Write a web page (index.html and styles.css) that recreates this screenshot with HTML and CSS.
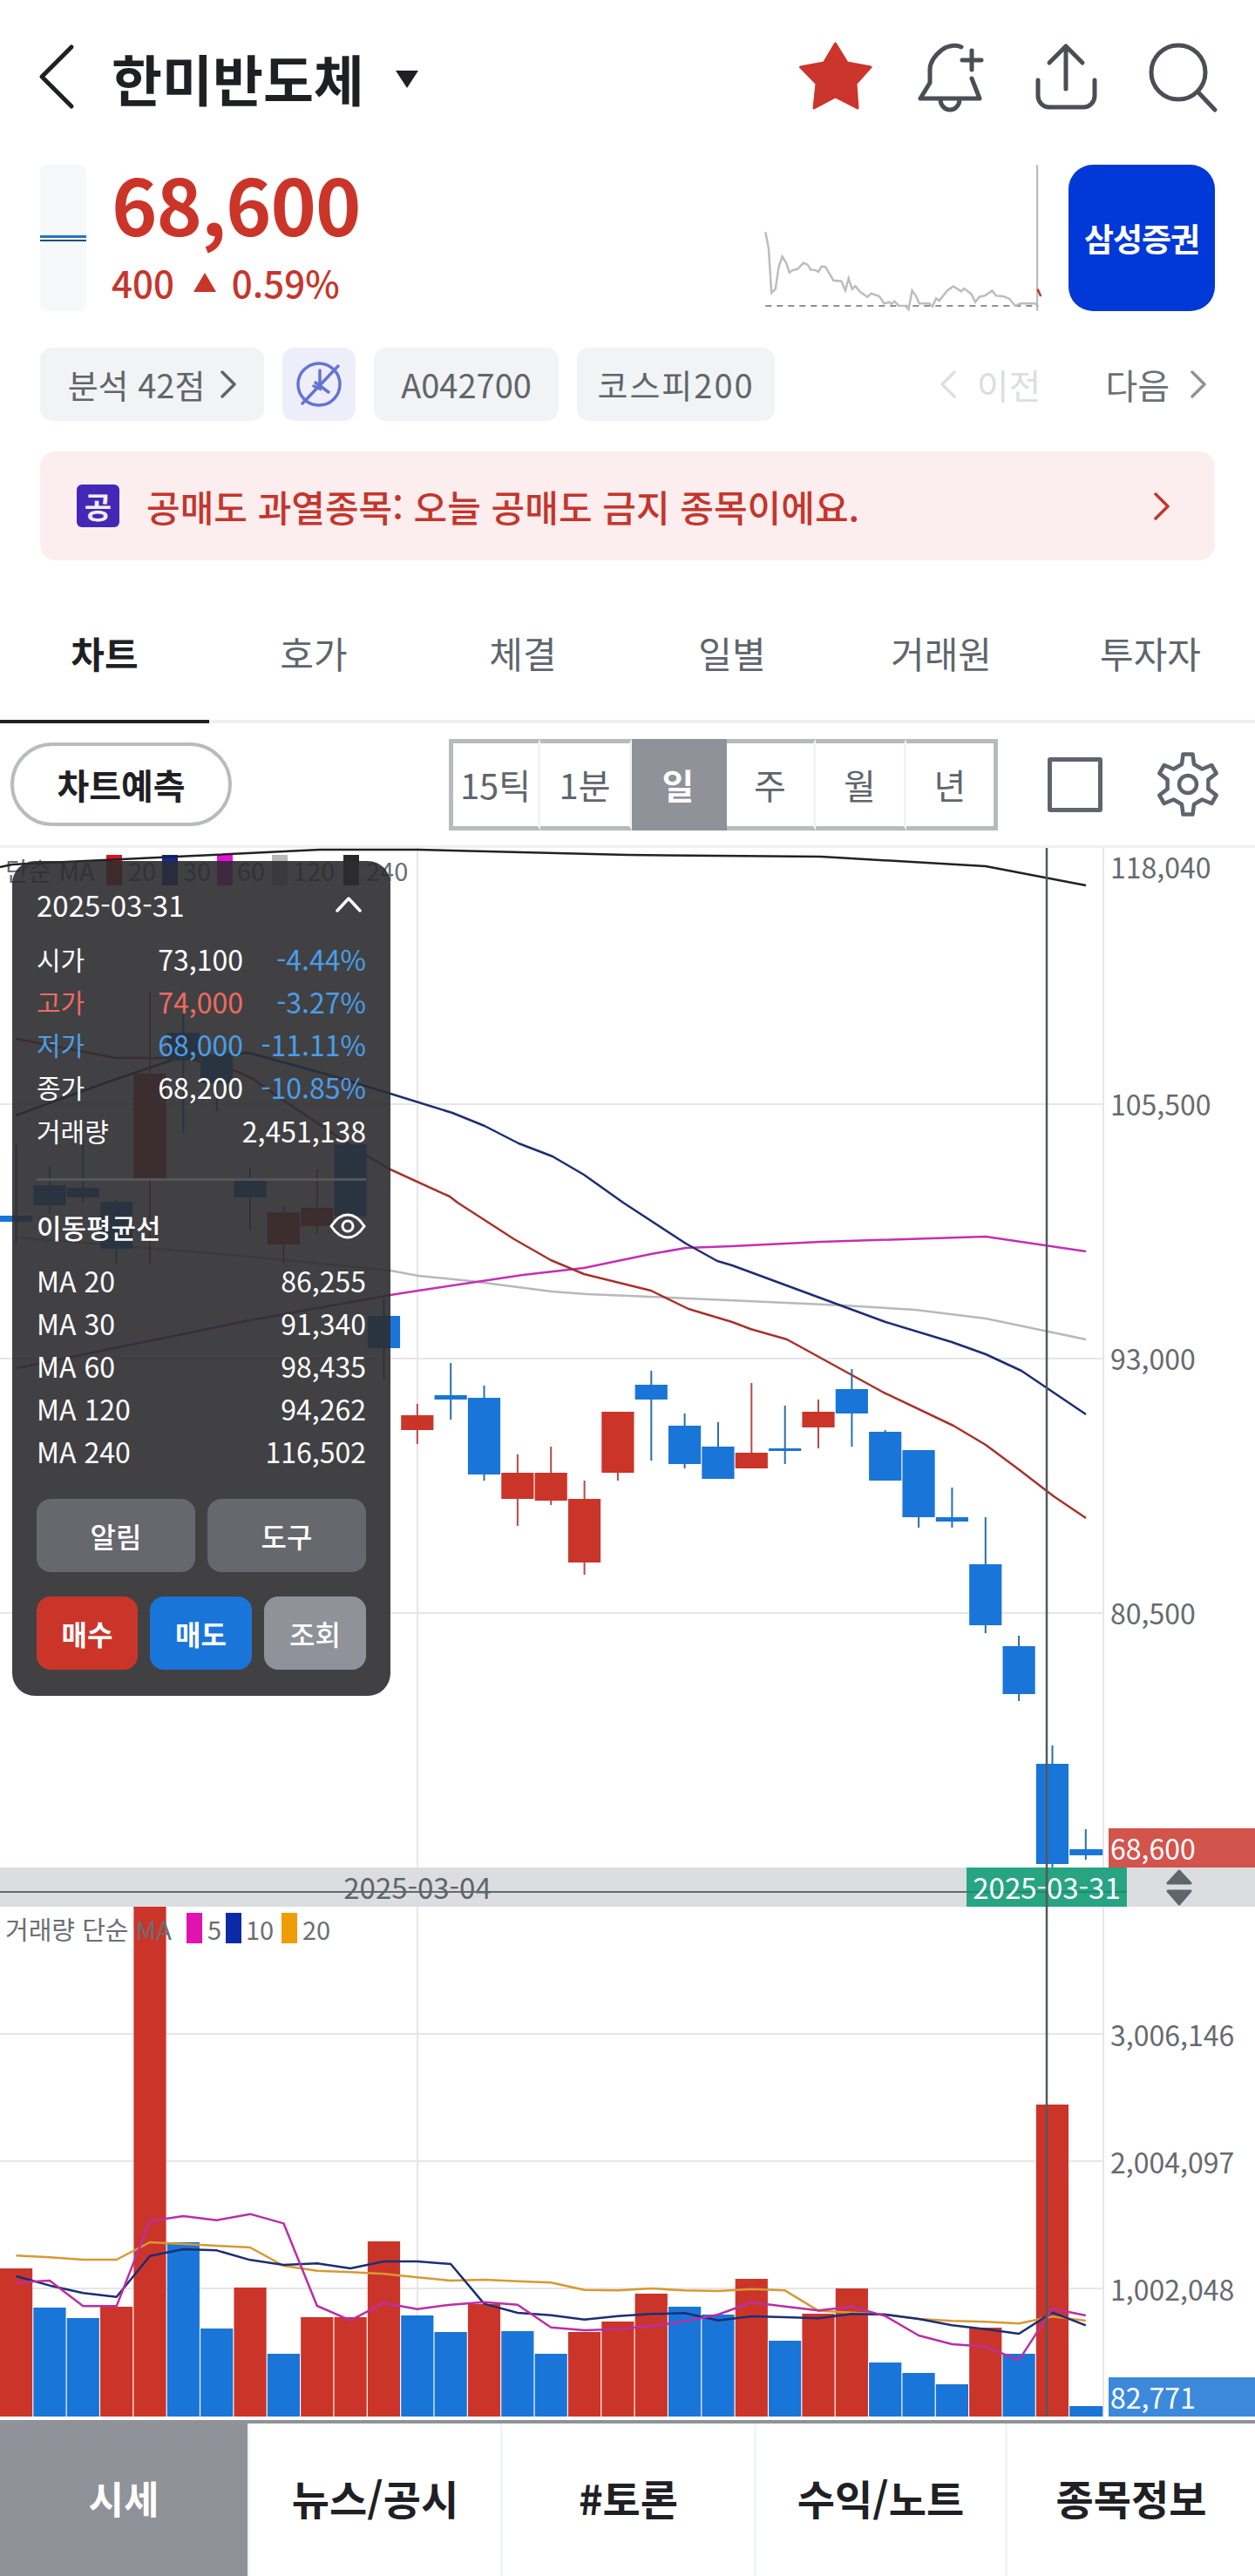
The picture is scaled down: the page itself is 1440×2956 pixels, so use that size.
FILE: index.html
```html
<!DOCTYPE html>
<html lang="ko">
<head>
<meta charset="utf-8">
<title>한미반도체</title>
<link rel="stylesheet" href="styles.css">
</head>
<body>
<div class="page">
  <header class="topbar">
    <svg class="back" width="44" height="76" viewBox="0 0 44 76"><path d="M38 4 4 38l34 34"/></svg>
    <h1 class="title">한미반도체</h1>
    <svg class="caret" width="26" height="20" viewBox="0 0 26 20"><path d="M0 0h26L13 20z"/></svg>
    <div class="top-actions">
      <svg class="star" width="90" height="88" viewBox="0 0 90 88"><path d="M44.500 6 58 28l27 5-17 19 2 28-25.500-13L20 80l3-28L4.500 33l27-5z"/></svg>
      <svg class="ic bell" width="80" height="88" viewBox="0 0 80 88"><path d="M53 10C47 7 38 8 31 13 22 20 17 28 17 36v15L6 69h68l-9-23M65 14v22M54 25h22M29 70a11 12 0 0 0 22 0"/></svg>
      <svg class="ic share" width="80" height="84" viewBox="0 0 80 84"><path d="M39 56V7M20 26 39 7l19 19M7 46v18a13 13 0 0 0 13 13h39a13 13 0 0 0 13-13V46"/></svg>
      <svg class="ic search" width="84" height="86" viewBox="0 0 84 86"><circle cx="38" cy="38" r="31"/><path d="m60 60 20 21"/></svg>
    </div>
  </header>

  <section class="quote">
    <div class="mini"><span class="mini-line"></span></div>
    <div class="price-box">
      <div class="price">68,600</div>
      <div class="change"><span>400</span><svg width="26" height="22" viewBox="0 0 26 22"><path d="M13 0l13 22H0z"/></svg><span>0.59%</span></div>
    </div>
    <svg class="spark" width="321" height="173" viewBox="340 560 700 520" preserveAspectRatio="none">
      <path class="spark-base" d="M345 1053H1025"/>
      <polyline class="spark-line" points="345,798 353,855 360,1008 370,995 378,920 387,883 397,905 405,938 413,930 425,926 440,905 450,910 458,928 470,930 478,935 485,917 495,918 515,965 535,968 545,1000 553,958 562,995 570,985 582,1005 600,1022 610,1010 630,1020 642,1045 655,1040 660,1047 668,1037 678,1052 695,1053 703,1065 712,1000 722,1020 730,1045 755,1045 763,1055 772,1027 780,1035 800,1000 815,985 835,1003 842,993 860,1012 870,1040 880,1022 895,1017 912,1000 922,1018 940,1020 955,1028 970,1053 985,1044 1020,1045 1028,1055"/>
      <path class="spark-now" d="M1025 567V1070"/>
      <path class="spark-tick" d="M1026 995 1034 1020"/>
    </svg>
    <div class="broker">삼성증권</div>
  </section>

  <nav class="chips">
    <span class="chip chip-score">분석 42점<svg class="chev" width="18" height="32" viewBox="0 0 18 32"><path d="m2 2 14 14L2 30"/></svg></span>
    <span class="chip chip-k">
      <svg width="56" height="56" viewBox="0 0 56 56"><circle cx="28" cy="28" r="24"/><path d="M50 7 9 50M29 12v21l-7-3M24 26l15 11"/></svg>
    </span>
    <span class="chip chip-code">A042700</span>
    <span class="chip chip-index">코스피200</span>
    <div class="pager">
      <span class="pager-off"><svg class="chev" width="18" height="32" viewBox="0 0 18 32"><path d="M16 2 2 16l14 14"/></svg>이전</span>
      <span class="pager-on">다음<svg class="chev" width="18" height="32" viewBox="0 0 18 32"><path d="m2 2 14 14L2 30"/></svg></span>
    </div>
  </nav>

  <aside class="notice">
    <span class="badge">공</span>
    <span class="notice-text">공매도 과열종목: 오늘 공매도 금지 종목이에요.</span>
    <svg class="chev notice-chev" width="18" height="32" viewBox="0 0 18 32"><path d="m2 2 14 14L2 30"/></svg>
  </aside>

  <nav class="tabs">
    <a class="tab tab-on">차트</a>
    <a class="tab">호가</a>
    <a class="tab">체결</a>
    <a class="tab">일별</a>
    <a class="tab">거래원</a>
    <a class="tab">투자자</a>
  </nav>

  <div class="toolbar">
    <button class="pill">차트예측</button>
    <div class="seg">
      <span class="seg-item w105">15틱</span>
      <span class="seg-item w105">1분</span>
      <span class="seg-item seg-on">일</span>
      <span class="seg-item w102">주</span>
      <span class="seg-item w104">월</span>
      <span class="seg-item w105">년</span>
    </div>
    <span class="square"></span>
    <svg class="gear" width="80" height="80" viewBox="0 0 80 80"><path d="M33 17 34.500 5.400h11L47 17l9.400 5.500L67.200 18l5.500 9.500-9.300 7.100v10.800l9.300 7.100-5.500 9.500-10.800-4.500L47 63l-1.500 11.600h-11L33 63l-9.400-5.500L12.800 62l-5.500-9.500 9.300-7.100V34.600l-9.300-7.100 5.500-9.500 10.800 4.500z"/><circle cx="40" cy="40" r="10"/></svg>
  </div>

  <main class="chart">
    <svg class="plot" width="1440" height="1807" viewBox="0 970 1440 1807">
      <rect class="rule-top" x="0" y="970" width="1440" height="3"/>
      <g class="grid">
        <path d="M0 1267H1266M0 1559H1266M0 1851H1266M0 2334H1266M0 2480H1266M0 2626H1266"/>
        <path d="M479 973V2773M1266 973V2773"/>
      </g>

      <g class="legend">
        <text x="6" y="998">단순 MA</text>
        <rect class="c-red" x="122" y="981" width="18" height="35"/><text x="147" y="998">20</text>
        <rect class="c-navy" x="186" y="981" width="18" height="35"/><text x="210" y="998">30</text>
        <rect class="c-mag" x="249" y="981" width="18" height="35"/><text x="272" y="998">60</text>
        <rect class="c-gray" x="312" y="981" width="18" height="35"/><text x="336" y="998">120</text>
        <rect class="c-black" x="394" y="981" width="18" height="35"/><text x="420" y="998">240</text>
      </g>

      <g class="ma">
        <polyline class="l-black" points="0,995 14,992 202,983 367,975 480,975 720,981 942,983 1131,994 1246,1016"/>
        <polyline class="l-gray" points="18,1420 266,1440 448,1458 480,1464 540,1470 633,1482 673,1485 767,1489 858,1493 968,1498 1050,1503 1131,1513 1246,1537"/>
        <polyline class="l-mag" points="19,1570 287,1515 448,1486 480,1481 540,1472 600,1463 670,1455 747,1439 787,1432 840,1430 942,1425 1131,1419 1246,1436"/>
        <polyline class="l-navy" points="18,1280 128,1240 202,1215 285,1208 376,1233 448,1255 519,1277 556,1292 595,1312 634,1327 670,1348 715,1380 787,1427 823,1447 840,1452 1016,1517 1092,1540 1131,1554 1172,1573 1246,1623"/>
        <polyline class="l-red" points="18,1192 133,1214 211,1214 266,1227 289,1237 321,1260 422,1327 448,1342 516,1373 525,1380 590,1422 632,1446 670,1462 747,1481 790,1502 840,1517 861,1525 903,1537 1014,1598 1094,1636 1131,1658 1170,1687 1209,1717 1246,1742"/>
      </g>

      <path class="wick-up" d="M172 1138V1450M325.400 1384V1450M363.800 1342V1416M478.800 1611V1657M593.900 1669V1751M632.200 1660V1727M670.600 1699V1807M708.900 1620V1699M862.300 1587V1685M939 1606V1662"/>
      <path class="wick-down" d="M18.600 1313V1427M57 1338V1393M95.300 1308V1380M133.700 1377V1450M210.400 1163V1300M248.700 1210V1275M287 1340V1412M440.500 1490V1584M517.200 1564V1629M555.500 1590V1699M747.300 1573V1676M785.600 1622V1685M824 1632V1697M900.700 1613V1680M977.400 1571V1660M1015.700 1641V1699M1054.100 1664V1753M1092.400 1707V1753M1130.800 1741V1874M1169.100 1877V1952M1207.500 2003V2143M1245.800 2099V2134"/>

      <g class="down">
        <rect x="0" y="1395" width="37.200" height="7"/>
        <rect x="38.350" y="1360" width="37.200" height="23"/>
        <rect x="76.700" y="1363" width="37.200" height="11"/>
        <rect x="115.050" y="1379" width="37.200" height="54"/>
        <rect x="191.750" y="1185" width="37.200" height="32"/>
        <rect x="230.100" y="1210" width="37.200" height="33"/>
        <rect x="268.450" y="1353" width="37.200" height="21"/>
        <rect x="383.500" y="1313" width="37.200" height="83"/>
        <rect x="421.850" y="1510" width="37.200" height="37"/>
        <rect x="498.550" y="1601" width="37.200" height="5"/>
        <rect x="536.900" y="1604" width="37.200" height="88"/>
        <rect x="728.650" y="1589" width="37.200" height="17"/>
        <rect x="767" y="1636" width="37.200" height="44"/>
        <rect x="805.350" y="1660" width="37.200" height="37"/>
        <rect x="882.050" y="1662" width="37.200" height="3"/>
        <rect x="958.750" y="1594" width="37.200" height="28"/>
        <rect x="997.100" y="1643" width="37.200" height="56"/>
        <rect x="1035.450" y="1664" width="37.200" height="77"/>
        <rect x="1073.800" y="1741" width="37.200" height="5"/>
        <rect x="1112.150" y="1795" width="37.200" height="70"/>
        <rect x="1150.500" y="1889" width="37.200" height="55"/>
        <rect x="1188.850" y="2024" width="37.200" height="115"/>
        <rect x="1227.200" y="2122" width="38" height="7"/>
      </g>
      <g class="up">
        <rect x="153.400" y="1232" width="37.200" height="121"/>
        <rect x="306.800" y="1391" width="37.200" height="37"/>
        <rect x="345.150" y="1386" width="37.200" height="21"/>
        <rect x="460.200" y="1624" width="37.200" height="17"/>
        <rect x="575.250" y="1690" width="37.200" height="30"/>
        <rect x="613.600" y="1690" width="37.200" height="32"/>
        <rect x="651.950" y="1720" width="37.200" height="73"/>
        <rect x="690.300" y="1620" width="37.200" height="70"/>
        <rect x="843.700" y="1667" width="37.200" height="18"/>
        <rect x="920.400" y="1620" width="37.200" height="18"/>
      </g>

      <g class="axis">
        <text x="1274" y="994">118,040</text>
        <text x="1274" y="1266">105,500</text>
        <text x="1274" y="1558">93,000</text>
        <text x="1274" y="1850">80,500</text>
        <text x="1274" y="2334">3,006,146</text>
        <text x="1274" y="2480">2,004,097</text>
        <text x="1274" y="2626">1,002,048</text>
      </g>

      <rect class="c-price" x="1272" y="2098" width="168" height="45"/>
      <text class="axis-on" x="1274" y="2120">68,600</text>

      <rect class="c-time" x="0" y="2143" width="1440" height="45"/>
      <rect class="c-hair" x="0" y="2170" width="1109" height="2"/>
      <text class="axis-date" x="479" y="2165">2025-03-04</text>

      <g class="down">
        <rect x="38.350" y="2648" width="37.200" height="125"/>
        <rect x="76.700" y="2660" width="37.200" height="113"/>
        <rect x="191.750" y="2573" width="37.200" height="200"/>
        <rect x="230.100" y="2672" width="37.200" height="101"/>
        <rect x="306.800" y="2701" width="37.200" height="72"/>
        <rect x="460.200" y="2657" width="37.200" height="116"/>
        <rect x="498.550" y="2676" width="37.200" height="97"/>
        <rect x="575.250" y="2675" width="37.200" height="98"/>
        <rect x="613.600" y="2701" width="37.200" height="72"/>
        <rect x="767" y="2647" width="37.200" height="126"/>
        <rect x="805.350" y="2656" width="37.200" height="117"/>
        <rect x="882.050" y="2686" width="37.200" height="87"/>
        <rect x="997.100" y="2711" width="37.200" height="62"/>
        <rect x="1035.450" y="2723" width="37.200" height="50"/>
        <rect x="1073.800" y="2736" width="37.200" height="37"/>
        <rect x="1150.500" y="2701" width="37.200" height="72"/>
        <rect x="1227.200" y="2761" width="38" height="12"/>
      </g>
      <g class="up">
        <rect x="0" y="2603" width="37.200" height="170"/>
        <rect x="115.050" y="2647" width="37.200" height="126"/>
        <rect x="153.400" y="2188" width="37.200" height="585"/>
        <rect x="268.450" y="2625" width="37.200" height="148"/>
        <rect x="345.150" y="2659" width="37.200" height="114"/>
        <rect x="383.500" y="2659" width="37.200" height="114"/>
        <rect x="421.850" y="2572" width="37.200" height="201"/>
        <rect x="536.900" y="2644" width="37.200" height="129"/>
        <rect x="651.950" y="2676" width="37.200" height="97"/>
        <rect x="690.300" y="2664" width="37.200" height="109"/>
        <rect x="728.650" y="2632" width="37.200" height="141"/>
        <rect x="843.700" y="2615" width="37.200" height="158"/>
        <rect x="920.400" y="2655" width="37.200" height="118"/>
        <rect x="958.750" y="2626" width="37.200" height="147"/>
        <rect x="1112.150" y="2671" width="37.200" height="102"/>
        <rect x="1188.850" y="2415" width="37.200" height="358"/>
      </g>

      <g class="legend">
        <text x="6" y="2213">거래량 단순 MA</text>
        <rect class="c-pink" x="214" y="2195" width="18" height="35"/><text x="238" y="2213">5</text>
        <rect class="c-blue10" x="259" y="2195" width="18" height="35"/><text x="282" y="2213">10</text>
        <rect class="c-orange" x="323" y="2195" width="18" height="35"/><text x="347" y="2213">20</text>
      </g>

      <g class="vma" transform="translate(0 2476) scale(1 .33333)">
        <polyline class="v-orange" points="18.600,337 57,343 95.300,351 133.700,351 172,291 210.400,297 248.700,303 287,309 325.400,372 363.800,389 402.100,394 440.500,400 478.800,412 517.200,423 555.500,420 593.900,425 632.200,430 670.600,455 708.900,457 747.300,450 785.600,457 824,459 862.300,452 900.700,457 939,527 977.400,533 1015.700,540 1054.100,555 1092.400,562 1130.800,565 1169.100,571 1207.500,547 1245.800,561"/>
        <polyline class="v-navy" points="18.600,408 57,440 95.300,466 133.700,479 172,338 210.400,315 248.700,319 287,352 325.400,369 363.800,364 402.100,381 440.500,357 478.800,357 517.200,366 555.500,503 593.900,534 632.200,542 670.600,557 708.900,545 747.300,538 785.600,535 824,560 862.300,546 900.700,549 939,553 977.400,538 1015.700,540 1054.100,555 1092.400,577 1130.800,590 1169.100,606 1207.500,533 1245.800,577"/>
        <polyline class="v-mag" points="18.600,430 57,423 95.300,511 133.700,511 172,218 210.400,201 248.700,215 287,194 325.400,226 363.800,510 402.100,560 440.500,500 478.800,521 517.200,506 555.500,497 593.900,506 632.200,584 670.600,594 708.900,590 747.300,580 785.600,563 824,540 862.300,498 900.700,512 939,526 977.400,513 1015.700,545 1054.100,612 1092.400,642 1130.800,650 1169.100,697 1207.500,520 1245.800,543"/>
      </g>

      <rect class="c-vol" x="1272" y="2728" width="168" height="45"/>
      <text class="axis-on" x="1274" y="2750">82,771</text>

      <rect class="c-green" x="1109" y="2143" width="184" height="45"/>
      <rect class="c-hair-green" x="1109" y="2170" width="184" height="2"/>
      <text class="axis-date axis-date-on" x="1201" y="2165">2025-03-31</text>
      <path class="updown" d="M1353 2147l13 14h-26zM1353 2185l13-15h-26z"/>
      <path class="cross" d="M1201 973V2773"/>
    </svg>

    <section class="tip">
      <div class="tip-head">
        <span class="tip-date">2025-03-31</span>
        <svg class="tip-fold" width="30" height="18" viewBox="0 0 30 18"><path d="M2 16 15 2l13 14"/></svg>
      </div>
      <div class="tip-grid">
        <span class="tl">시가</span><span class="tv">73,100</span><span class="tv t-blue">-4.44%</span>
        <span class="tl t-red">고가</span><span class="tv t-red">74,000</span><span class="tv t-blue">-3.27%</span>
        <span class="tl t-blue">저가</span><span class="tv t-blue">68,000</span><span class="tv t-blue">-11.11%</span>
        <span class="tl">종가</span><span class="tv">68,200</span><span class="tv t-blue">-10.85%</span>
      </div>
      <div class="tip-row"><span class="tl">거래량</span><span class="tv">2,451,138</span></div>
      <hr class="tip-rule">
      <div class="tip-ma-head">
        <span class="tip-ma-title">이동평균선</span>
        <svg class="tip-eye" width="42" height="30" viewBox="0 0 42 30"><path d="M2 15C8 6 14 2 21 2s13 4 19 13c-6 9-12 13-19 13S8 24 2 15z"/><circle cx="21" cy="15" r="6"/></svg>
      </div>
      <div class="tip-ma-list">
        <div class="tip-row"><span class="tv">MA 20</span><span class="tv">86,255</span></div>
        <div class="tip-row"><span class="tv">MA 30</span><span class="tv">91,340</span></div>
        <div class="tip-row"><span class="tv">MA 60</span><span class="tv">98,435</span></div>
        <div class="tip-row"><span class="tv">MA 120</span><span class="tv">94,262</span></div>
        <div class="tip-row"><span class="tv">MA 240</span><span class="tv">116,502</span></div>
      </div>
      <div class="tip-tools">
        <button class="tbtn tbtn-tool">알림</button>
        <button class="tbtn tbtn-tool">도구</button>
      </div>
      <div class="tip-orders">
        <button class="tbtn tbtn-buy">매수</button>
        <button class="tbtn tbtn-sell">매도</button>
        <button class="tbtn tbtn-view">조회</button>
      </div>
    </section>
  </main>

  <footer class="bottom">
    <a class="btab btab-on">시세</a>
    <a class="btab">뉴스/공시</a>
    <a class="btab">#토론</a>
    <a class="btab">수익/노트</a>
    <a class="btab">종목정보</a>
  </footer>
</div>
</body>
</html>
```

FILE: styles.css
```css
* { box-sizing: border-box; }
html, body { margin: 0; padding: 0; background: #fff; }
body { font-family: "Noto Sans CJK KR", "Noto Sans", sans-serif; color: #1f2024; }
.page { width: 1440px; height: 2956px; display: flex; flex-direction: column; overflow: hidden; }
svg { display: block; }
button { font-family: inherit; border: 0; padding: 0; }

/* header */
.topbar { height: 176px; display: flex; align-items: center; padding-left: 44px; flex: none; }
.back path { fill: none; stroke: #1f2024; stroke-width: 5; stroke-linecap: round; stroke-linejoin: round; }
.title { margin: 0 0 0 40px; font-size: 63px; line-height: 1; font-weight: 700; }
.caret { margin-left: 36px; margin-top: 6px; fill: #1f2024; }
.top-actions { margin-left: auto; display: flex; align-items: center; padding-right: 42px; }
.star { fill: #cc352c; stroke: #cc352c; stroke-width: 3; stroke-linejoin: round; }
.ic { fill: none; stroke: #4a4e55; stroke-width: 5; stroke-linecap: round; stroke-linejoin: round; }
.bell { margin-left: 46px; }
.share { margin-left: 54px; }
.search { margin-left: 50px; }

/* quote */
.quote { height: 168px; margin-top: 13px; padding: 0 0 0 46px; display: flex; flex: none; }
.mini { width: 53px; height: 168px; background: #f6f8fa; border-radius: 8px; display: flex; align-items: center; }
.mini-line { display: block; width: 100%; height: 7px; border-top: 3px solid #2a74b8; border-bottom: 2px solid #1f4f7a; }
.price-box { margin-left: 29px; width: 748px; flex: none; display: flex; flex-direction: column; }
.price { font-size: 89px; line-height: 92px; font-weight: 700; color: #cb3529; letter-spacing: -1px; margin-top: -2px; }
.change { display: flex; align-items: center; font-size: 42px; line-height: 60px; color: #c8352b; font-weight: 500; margin-top: 15px; }
.change svg { fill: #c8352b; margin: 0 18px 0 22px; }
.spark { margin-top: -2px; flex: none; }
.spark-base { stroke: #8f8f8f; stroke-width: 2; stroke-dasharray: 7 6; fill: none; vector-effect: non-scaling-stroke; }
.spark-line { stroke: #bcbdbf; stroke-width: 2.500; fill: none; vector-effect: non-scaling-stroke; }
.spark-now { stroke: #b5b6b8; stroke-width: 2; fill: none; vector-effect: non-scaling-stroke; }
.spark-tick { stroke: #c0342a; stroke-width: 2.500; fill: none; vector-effect: non-scaling-stroke; }
.broker { margin-left: 29px; width: 168px; height: 168px; flex: none; background: #0039d8; border-radius: 28px; color: #fff; font-size: 37px; font-weight: 700; display: flex; align-items: center; justify-content: center; white-space: nowrap; letter-spacing: -1px; }

/* chips */
.chips { margin-top: 42px; height: 84px; padding: 0 46px; display: flex; gap: 21px; align-items: stretch; flex: none; }
.chip { background: #f2f3f4; border-radius: 14px; display: flex; align-items: center; justify-content: center; color: #5f656c; font-size: 38px; line-height: 1; white-space: nowrap; }
.chev { fill: none; stroke: currentColor; stroke-width: 3.500; stroke-linecap: round; stroke-linejoin: round; }
.chip-score { width: 257px; gap: 18px; }
.chip-k { width: 84px; background: #eeeefb; }
.chip-k svg { fill: none; stroke: #6474d4; stroke-width: 3.500; stroke-linecap: round; }
.chip-code { width: 212px; }
.chip-index { width: 227px; letter-spacing: 2px; }
.pager { margin-left: auto; margin-right: 10px; display: flex; align-items: center; gap: 74px; font-size: 40px; }
.pager-off, .pager-on { display: flex; align-items: center; gap: 24px; }
.pager-off { color: #dcdee0; }
.pager-on { color: #6b7077; }
.pager-on .chev { color: #8f9298; }

/* notice */
.notice { margin: 35px 46px 0; height: 125px; background: #fceeee; border-radius: 18px; display: flex; align-items: center; padding: 0 52px 0 42px; color: #c5352c; flex: none; }
.badge { width: 49px; height: 49px; border-radius: 6px; background: #4527b8; color: #eee; font-size: 34px; font-weight: 700; display: flex; align-items: center; justify-content: center; line-height: 1; }
.notice-text { margin-left: 31px; font-size: 42px; line-height: 1; font-weight: 500; white-space: nowrap; }
.notice-chev { margin-left: auto; }

/* tabs */
.tabs { height: 187px; display: grid; grid-template-columns: repeat(6, 240px); border-bottom: 4px solid #f0f0f3; flex: none; }
.tab { display: flex; align-items: center; justify-content: center; padding-top: 27px; font-size: 42px; color: #5f656c; margin-bottom: -4px; border-bottom: 4px solid transparent; }
.tab-on { color: #1f2024; font-weight: 700; border-bottom-color: #1f2024; }

/* toolbar */
.toolbar { height: 140px; display: flex; align-items: center; padding: 0 0 0 12px; flex: none; }
.pill { width: 254px; height: 96px; border-radius: 48px; background: #fff; border: 4px solid #b9bbbf; color: #1f2024; font-size: 40px; font-weight: 700; }
.seg { margin-left: 249px; height: 105px; display: flex; }
.seg-item { display: flex; align-items: center; justify-content: center; font-size: 40px; color: #5f656c; border-top: 5px solid #b8babe; border-bottom: 5px solid #b8babe; border-right: 3px solid #f2f4f5; }
.seg-item:first-child { border-left: 5px solid #b8babe; }
.seg-item:last-child { border-right: 5px solid #b8babe; }
.w105 { width: 105px; }
.w102 { width: 102px; }
.w104 { width: 104px; }
.seg-on { width: 109px; background: #8f9298; border-color: #8f9298; color: #fff; font-weight: 700; }
.square { margin-left: 57px; width: 63px; height: 63px; border: 5px solid #5f656c; border-radius: 3px; }
.gear { margin-left: 58px; fill: none; stroke: #5f656c; stroke-width: 4.500; stroke-linejoin: round; }

/* chart */
.chart { position: relative; height: 1807px; flex: none; }
.plot { width: 1440px; height: 1807px; }
.plot text { font-family: "Noto Sans CJK KR", "Noto Sans", sans-serif; dominant-baseline: central; }
.rule-top { fill: #f0f0f3; }
.grid path { stroke: #e6e6e9; stroke-width: 2; fill: none; }
.legend text { font-size: 29px; fill: #6a6e74; }
.c-red { fill: #d8161c; }
.c-navy { fill: #0c2aa8; }
.c-mag { fill: #e810d8; }
.c-gray { fill: #b8b8b8; }
.c-black { fill: #28282a; }
.c-pink { fill: #e012b0; }
.c-blue10 { fill: #0c2aa8; }
.c-orange { fill: #ee9c08; }
.ma polyline { fill: none; stroke-width: 2.500; stroke-linejoin: round; }
.l-black { stroke: #222; }
.l-gray { stroke: #b8b8ba; }
.l-mag { stroke: #c52fb5; }
.l-navy { stroke: #1c2e74; }
.l-red { stroke: #a8322c; }
.wick-up { stroke: #b94a45; stroke-width: 2; fill: none; }
.wick-down { stroke: #2a6fa8; stroke-width: 2; fill: none; }
.up { fill: #cb3529; }
.down { fill: #1a75d8; }
.axis text { font-size: 32px; fill: #666a70; }
.axis-on { font-size: 32px; fill: #fff; }
.c-price { fill: #d3544c; }
.c-vol { fill: #3c89dc; }
.c-time { fill: #dcdde1; }
.c-hair { fill: #66686c; }
.c-hair-green { fill: #218a6e; }
.axis-date { font-size: 33px; fill: #5f656c; text-anchor: middle; }
.axis-date-on { fill: #fff; }
.c-green { fill: #27a583; }
.updown { fill: #5f656c; stroke: #5f656c; stroke-width: 3; stroke-linejoin: round; }
.vma polyline { fill: none; stroke-width: 2.500; stroke-linejoin: round; vector-effect: non-scaling-stroke; }
.v-orange { stroke: #d79a30; }
.v-navy { stroke: #1c2e74; }
.v-mag { stroke: #b92fa5; }
.cross { stroke: #55585c; stroke-width: 2.500; fill: none; }

/* tooltip */
.tip { position: absolute; left: 14px; top: 18px; width: 434px; height: 958px; padding: 28px; background: rgba(44, 44, 48, .9); border-radius: 26px; color: #fff; font-size: 32px; }
.tip-head { height: 48px; display: flex; align-items: center; justify-content: space-between; margin-top: -2px; margin-bottom: 2px; }
.tip-date { font-size: 33px; line-height: 1; }
.tip-fold { margin-right: 5px; fill: none; stroke: #fff; stroke-width: 3.500; stroke-linecap: round; stroke-linejoin: round; }
.tip-grid { margin-top: 13px; display: grid; grid-template-columns: 1fr auto 141px; grid-auto-rows: 49.250px; align-items: center; }
.tl { font-size: 30px; line-height: 1; }
.tv { font-size: 32px; line-height: 1; text-align: right; white-space: nowrap; }
.t-red { color: #ee6a60; }
.t-blue { color: #4a9ee8; }
.tip-row { height: 49px; display: flex; align-items: center; justify-content: space-between; }
.tip-rule { margin: 31px 0 0; height: 3px; border: 0; background: #56565a; }
.tip-ma-head { margin-top: 28px; height: 48px; display: flex; align-items: center; justify-content: space-between; }
.tip-ma-title { font-size: 31px; line-height: 1; font-weight: 500; }
.tip-eye { fill: none; stroke: #fff; stroke-width: 3; }
.tip-ma-list { margin-top: 13px; }
.tip-tools { margin-top: 31px; display: grid; grid-template-columns: 182px 182px; gap: 14px; }
.tip-tools .tbtn { height: 84px; }
.tip-orders { margin-top: 28px; display: grid; grid-template-columns: 116px 117px 117px; gap: 14px; }
.tip-orders .tbtn { height: 84px; }
.tbtn { border-radius: 16px; color: #fff; font-size: 32px; font-weight: 500; }
.tbtn-tool { background: #66686e; }
.tbtn-buy { background: #cb3529; font-weight: 700; }
.tbtn-sell { background: #1a75d8; font-weight: 700; }
.tbtn-view { background: #8f9298; }

/* bottom */
.bottom { height: 179px; display: grid; grid-template-columns: 284px 290px 291px 288px 287px; border-top: 4px solid #8f9298; flex: none; }
.btab { display: flex; align-items: center; justify-content: center; font-size: 47px; font-weight: 700; color: #1f2024; border-left: 3px solid #f2f4f5; padding-bottom: 6px; }
.btab-on { background: #8f9298; color: #fff; border-left: 0; font-size: 44px; }
```
